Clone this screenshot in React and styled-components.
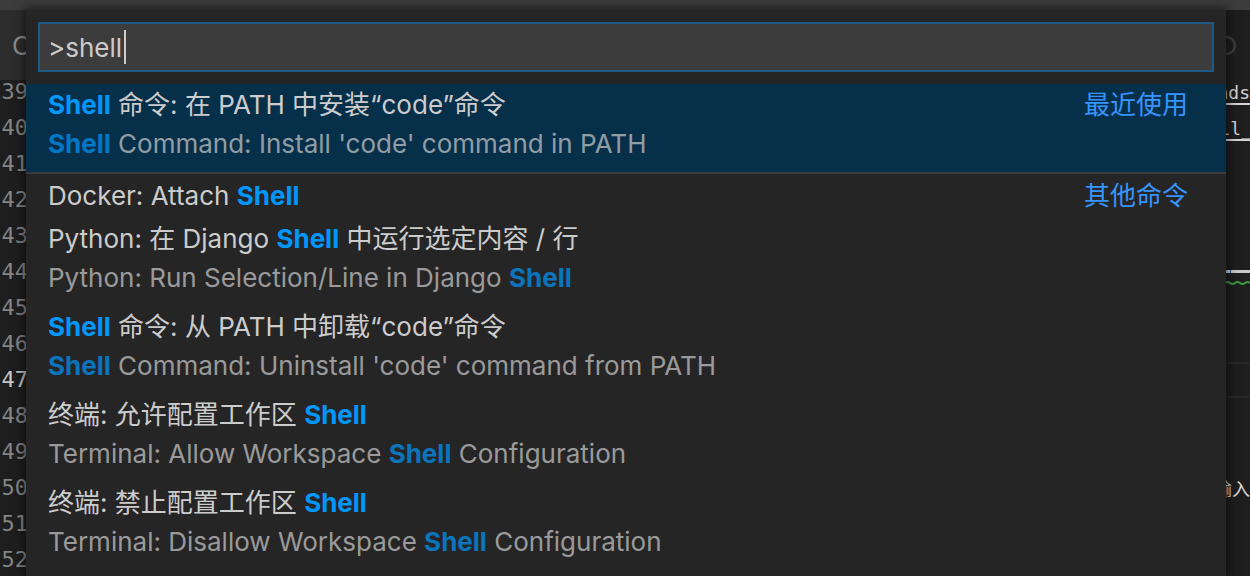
import React from "react";
import styled, { createGlobalStyle } from "styled-components";

const GlobalStyle = createGlobalStyle`
  html, body { margin: 0; padding: 0; background: #1e1e1e; }
  body {
    width: 1250px; height: 576px; overflow: hidden;
    font-family: "Inter", "Noto Sans CJK SC", sans-serif;
  }
`;

const Workbench = styled.div`
  position: relative;
  width: 1250px;
  height: 576px;
  overflow: hidden;
  display: flex;
  flex-direction: column;
  background: #1e1e1e;
`;

const TitleBar = styled.div`
  height: 10px;
  flex-shrink: 0;
  background: #3c3c3c;
`;

const TabBar = styled.div`
  height: 70px;
  flex-shrink: 0;
  display: flex;
  background: #252526;
`;

const Tab = styled.div`
  flex: ${(p) => (p.$active ? "0 0 60px" : "1")};
  display: flex;
  align-items: center;
  justify-content: ${(p) => (p.$active ? "flex-end" : "flex-start")};
  padding: 0 12px;
  background: ${(p) => (p.$active ? "#1e1e1e" : "#2d2d2d")};
  color: ${(p) => (p.$active ? "#3e3e3e" : "#8b8b8b")};
  font-size: 26px;
  white-space: nowrap;
  overflow: hidden;
`;

const Editor = styled.div`
  flex: 1;
  overflow: hidden;
  display: flex;
  flex-direction: column;
`;

const Lines = styled.div`
  margin-top: -6px;
  display: flex;
  flex-direction: column;
`;

const EditorLine = styled.div`
  display: grid;
  grid-template-columns: 30px 1fr;
  height: 36px;
  flex-shrink: 0;
`;

const LineNumber = styled.div`
  font-family: "DejaVu Sans Mono", monospace;
  font-size: 22px;
  line-height: 36px;
  text-align: right;
  padding-right: 2px;
  color: ${(p) => (p.$current ? "#c6c6c6" : "#858585")};
  overflow: hidden;
`;

const CodeCell = styled.div`
  display: flex;
  justify-content: flex-end;
  align-items: center;
  overflow: hidden;
  box-sizing: border-box;
  border-top: 2px solid ${(p) => (p.$current ? "#282828" : "transparent")};
  border-bottom: 2px solid ${(p) => (p.$current ? "#282828" : "transparent")};
`;

const CodeText = styled.span`
  font-family: "DejaVu Sans Mono", "Noto Sans CJK SC", monospace;
  font-size: 18px;
  color: #d4d4d4;
  white-space: nowrap;
  margin-right: ${(p) => -(p.$shift || 0)}px;
  text-decoration: ${(p) => (p.$link ? "underline" : "none")};
  text-decoration-color: #d4d4d4;
  text-decoration-thickness: 2px;
  text-underline-offset: 4px;
`;

const RuleMark = styled.div`
  width: 40px;
  display: flex;
  flex-direction: column;
  gap: 7px;
  margin-top: 12px;
`;

const RuleBar = styled.div`
  height: 3px;
  background: linear-gradient(
    to right,
    #c8c8c8 0,
    #c8c8c8 50%,
    #1b5ea8 50%,
    #1b5ea8 53%,
    #c8c8c8 53%
  );
`;

const QuickOpen = styled.div`
  position: absolute;
  left: 26px;
  top: 10px;
  width: 1200px;
  bottom: 0;
  background: #252526;
  box-shadow: 0 0 10px 2px rgba(0, 0, 0, 0.55);
  padding-top: 12px;
  display: flex;
  flex-direction: column;
`;

const InputBox = styled.div`
  margin: 0 12px;
  height: 50px;
  box-sizing: border-box;
  border: 2px solid #1d5a86;
  background: #3c3c3c;
  display: flex;
  align-items: center;
  padding-left: 8px;
  font-size: 26px;
  color: #cccccc;
`;

const Caret = styled.span`
  display: inline-block;
  width: 2px;
  height: 34px;
  margin-left: 2px;
  background: #cccccc;
`;

const List = styled.div`
  margin-top: 12px;
  display: flex;
  flex-direction: column;
`;

const Row = styled.div`
  display: flex;
  justify-content: space-between;
  padding: 0 38px 0 22px;
  background: ${(p) => (p.$selected ? "#062f4a" : "transparent")};
  border-top: ${(p) => (p.$separator ? "2px solid #3b3b3d" : "none")};
  padding-bottom: ${(p) => (p.$twoLine ? "10px" : "0")};
`;

const Texts = styled.div`
  display: flex;
  flex-direction: column;
`;

const Label = styled.div`
  font-size: 26px;
  line-height: ${(p) => (p.$twoLine ? "42px" : "44px")};
  color: #cccccc;
  white-space: nowrap;
`;

const Detail = styled.div`
  font-size: 26px;
  line-height: 36px;
  color: #cccccc;
  opacity: 0.7;
  white-space: nowrap;
`;

const Hl = styled.span`
  color: #0097fb;
  font-weight: 700;
`;

const Group = styled.div`
  font-size: 26px;
  line-height: ${(p) => (p.$twoLine ? "42px" : "44px")};
  color: #3794ff;
  white-space: nowrap;
`;

function highlight(text) {
  return text.split(/(Shell)/).map((part, i) =>
    part === "Shell" ? <Hl key={i}>{part}</Hl> : <React.Fragment key={i}>{part}</React.Fragment>
  );
}

const items = [
  {
    label: "Shell 命令: 在 PATH 中安装“code”命令",
    detail: "Shell Command: Install 'code' command in PATH",
    group: "最近使用",
    selected: true,
  },
  { label: "Docker: Attach Shell", group: "其他命令", separator: true },
  {
    label: "Python: 在 Django Shell 中运行选定内容 / 行",
    detail: "Python: Run Selection/Line in Django Shell",
  },
  {
    label: "Shell 命令: 从 PATH 中卸载“code”命令",
    detail: "Shell Command: Uninstall 'code' command from PATH",
  },
  {
    label: "终端: 允许配置工作区 Shell",
    detail: "Terminal: Allow Workspace Shell Configuration",
  },
  {
    label: "终端: 禁止配置工作区 Shell",
    detail: "Terminal: Disallow Workspace Shell Configuration",
  },
];

function Squiggle() {
  return (
    <svg width="40" height="6" viewBox="0 0 40 6">
      <path
        d="M0 1 Q2.5 5 5 3 T10 3 T15 3 T20 3 T25 3 T30 3 T35 3 T40 3"
        fill="none"
        stroke="#3c9b3c"
        strokeWidth="2"
      />
    </svg>
  );
}

const code = {
  39: { text: "commands", link: true },
  40: { text: "install_", link: true, shift: 2 },
  44: { rule: true },
  50: { text: "输入" },
};

export default function App() {
  const lineNums = Array.from({ length: 15 }, (_, i) => 39 + i);
  return (
    <>
      <GlobalStyle />
      <Workbench>
        <TitleBar />
        <TabBar>
          <Tab>Code</Tab>
          <Tab $active>○</Tab>
        </TabBar>
        <Editor>
          <Lines>
            {lineNums.map((n) => {
              const c = code[n];
              return (
                <EditorLine key={n}>
                  <LineNumber $current={n === 47}>{n}</LineNumber>
                  <CodeCell $current={n === 47}>
                    {c && c.text && (
                      <CodeText $link={c.link} $shift={c.shift}>
                        {c.text}
                      </CodeText>
                    )}
                    {c && c.rule && (
                      <RuleMark>
                        <RuleBar />
                        <Squiggle />
                      </RuleMark>
                    )}
                  </CodeCell>
                </EditorLine>
              );
            })}
          </Lines>
        </Editor>

        <QuickOpen>
          <InputBox>
            <span>&gt;shell</span>
            <Caret />
          </InputBox>
          <List>
            {items.map((it, i) => {
              const two = !!it.detail;
              return (
                <Row key={i} $selected={it.selected} $separator={it.separator} $twoLine={two}>
                  <Texts>
                    <Label $twoLine={two}>{highlight(it.label)}</Label>
                    {two && <Detail>{highlight(it.detail)}</Detail>}
                  </Texts>
                  {it.group && <Group $twoLine={two}>{it.group}</Group>}
                </Row>
              );
            })}
          </List>
        </QuickOpen>
      </Workbench>
    </>
  );
}
